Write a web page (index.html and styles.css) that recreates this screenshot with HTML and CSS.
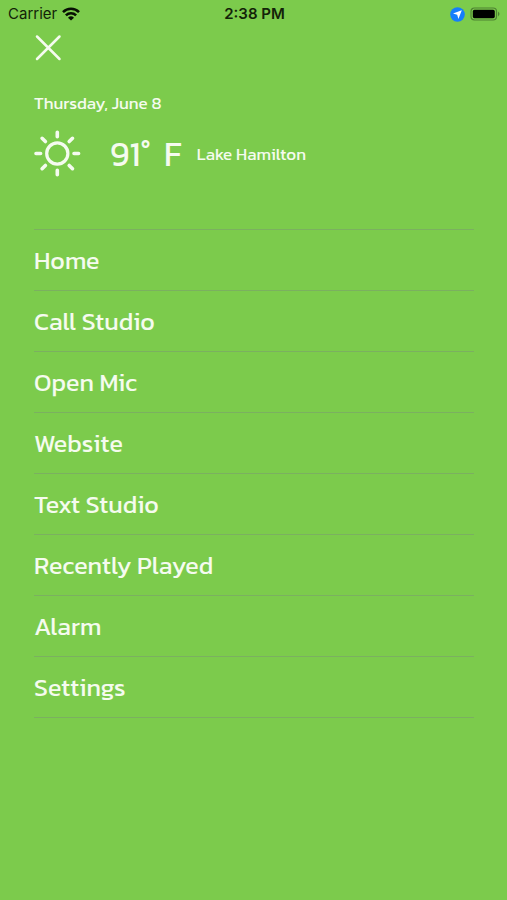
FILE: index.html
```html
<!DOCTYPE html>
<html lang="en">
<head>
<meta charset="utf-8">
<meta name="viewport" content="width=device-width, initial-scale=1">
<title>Menu</title>
<link rel="stylesheet" href="styles.css">
</head>
<body>
<header class="status">
  <div class="status-left">
    <span>Carrier</span>
    <svg class="wifi" width="18" height="14" viewBox="0 0 18 14" aria-hidden="true">
      <g fill="none" stroke="#071003" stroke-width="2.6">
        <path d="M1 5.1a11.4 11.4 0 0 1 16 0"/>
        <path d="M3.9 8.4a7.3 7.3 0 0 1 10.2 0"/>
      </g>
      <path d="M9 13.6 6 10.8a4.3 4.3 0 0 1 6 0z" fill="#071003"/>
    </svg>
  </div>
  <time class="clock">2:38 PM</time>
  <div class="status-right">
    <svg width="15" height="15" viewBox="0 0 15 15" aria-hidden="true">
      <circle cx="7.5" cy="7.5" r="7.3" fill="#157efb"/>
      <path d="M11.8 3.2 8.4 12 7.2 7.8 3 6.6z" fill="#fff"/>
    </svg>
    <svg width="31" height="14" viewBox="0 0 31 14" aria-hidden="true">
      <rect x="1" y="1" width="25.5" height="12" rx="3.4" fill="none" stroke="#4f8233" stroke-width="1.2"/>
      <rect x="2.8" y="2.8" width="22" height="8.4" rx="1.6" fill="#000"/>
      <path d="M28 4.6q3 2.4 0 4.8z" fill="#4f8233"/>
    </svg>
  </div>
</header>
<main class="menu">
  <button class="close" type="button" aria-label="Close menu">
    <svg width="28" height="28" viewBox="0 0 28 28" aria-hidden="true">
      <path d="M3 2.5 25.5 25M25.5 2.5 3 25" fill="none" stroke="#f5fbef" stroke-width="2.5" stroke-linecap="round"/>
    </svg>
  </button>
  <p class="date">Thursday, June 8</p>
  <section class="weather" aria-label="Weather">
    <svg class="sun" width="48" height="48" viewBox="0 0 48 48" aria-hidden="true">
      <g fill="none" stroke="#f5fbef" stroke-linecap="round" stroke-width="3.6">
        <circle cx="23.3" cy="23.5" r="10.6" stroke-width="3.2"/>
        <path d="M23.3 2.2v4.6M23.3 40.2v4.6M2 23.5h4.6M40 23.5h4.6M8.1 8.3l3.3 3.3M35.2 35.4l3.3 3.3M8.1 38.7l3.3-3.3M35.2 11.6l3.3-3.3"/>
      </g>
    </svg>
    <div class="temp"><span>91°</span> <span>F</span></div>
    <span class="place">Lake Hamilton</span>
  </section>
  <nav>
    <ul class="links">
      <li><a href="#home">Home</a></li>
      <li><a href="#call">Call Studio</a></li>
      <li><a href="#mic">Open Mic</a></li>
      <li><a href="#website">Website</a></li>
      <li><a href="#text">Text Studio</a></li>
      <li><a href="#recent">Recently Played</a></li>
      <li><a href="#alarm">Alarm</a></li>
      <li><a href="#settings">Settings</a></li>
    </ul>
  </nav>
</main>
</body>
</html>
```
FILE: styles.css
```css
* { box-sizing: border-box; }
body {
  margin: 0;
  min-height: 100vh;
  background: #7ccb4c;
  color: #f5fbef;
  font-family: Kanit, "Noto Sans", sans-serif;
}
.status {
  display: grid;
  grid-template-columns: 1fr auto 1fr;
  align-items: center;
  height: 28px;
  padding: 0 6px 0 8px;
  color: #132308;
  font: 15px/28px Inter, sans-serif;
}
.status-left, .status-right {
  display: flex;
  align-items: center;
  gap: 5px;
}
.status-right { justify-content: flex-end; }
.clock { font-weight: 600; }
.menu { padding: 6px 33px 0 34px; }
.close {
  display: block;
  padding: 0;
  border: 0;
  background: none;
  cursor: pointer;
}
.close svg { display: block; }
.date {
  margin: 30px 0 0;
  font-size: 17px;
  line-height: 22px;
}
.weather {
  display: flex;
  align-items: center;
  margin: 16px 0 51px;
}
.temp {
  display: flex;
  gap: 13px;
  margin: 0 15px 0 28px;
  font-size: 34px;
  line-height: 48px;
}
.place { font-size: 17px; }
.links {
  margin: 0;
  padding: 0;
  list-style: none;
  border-top: 1px solid #7bb060;
}
.links li { border-bottom: 1px solid #7bb060; }
.links a {
  display: block;
  padding: 15px 0;
  color: inherit;
  font-size: 25px;
  line-height: 30px;
  text-decoration: none;
}
```
